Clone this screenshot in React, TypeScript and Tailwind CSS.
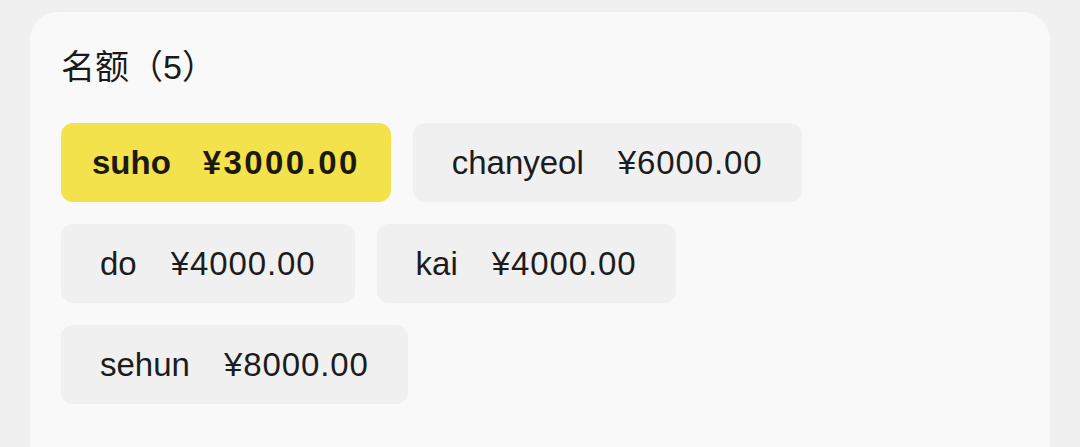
import { useState } from 'react';

const quotas = [
  { name: 'suho', price: '¥3000.00' },
  { name: 'chanyeol', price: '¥6000.00' },
  { name: 'do', price: '¥4000.00' },
  { name: 'kai', price: '¥4000.00' },
  { name: 'sehun', price: '¥8000.00' },
];

export default function App() {
  const [selected, setSelected] = useState(0);

  return (
    <div
      className="min-h-[447px] w-[1080px] overflow-hidden bg-[#f0f0f0] pt-[12px] pl-[30px]"
      style={{ fontFamily: '"Liberation Sans", "Noto Sans CJK SC", sans-serif' }}
    >
      <div className="h-[600px] w-[1020px] rounded-[28px] bg-[#f9f9f9] pt-[35px] pl-[31px] pr-[31px]">
        {/* Title */}
        <h2 className="text-[34px] leading-[40px] font-normal text-[#1a1a1a]">
          名额（{quotas.length}）
        </h2>

        {/* Quota chips */}
        <div className="mt-[36px] flex flex-wrap gap-[22px]">
          {quotas.map((q, i) => {
            const active = i === selected;
            return (
              <button
                key={q.name}
                onClick={() => setSelected(i)}
                className={
                  active
                    ? 'flex h-[79px] items-center rounded-[12px] bg-[#f4e24c] px-[31px] text-[33px] font-bold text-[#1c1a10]'
                    : 'flex h-[79px] items-center rounded-[12px] bg-[#f0f0f0] px-[39px] text-[33px] font-normal text-[#1c1c1c]'
                }
              >
                <span>{q.name}</span>
                <span className={active ? 'ml-[32px] tracking-[2.4px]' : 'ml-[34px] tracking-[0.9px]'}>
                  {q.price}
                </span>
              </button>
            );
          })}
        </div>
      </div>
    </div>
  );
}
